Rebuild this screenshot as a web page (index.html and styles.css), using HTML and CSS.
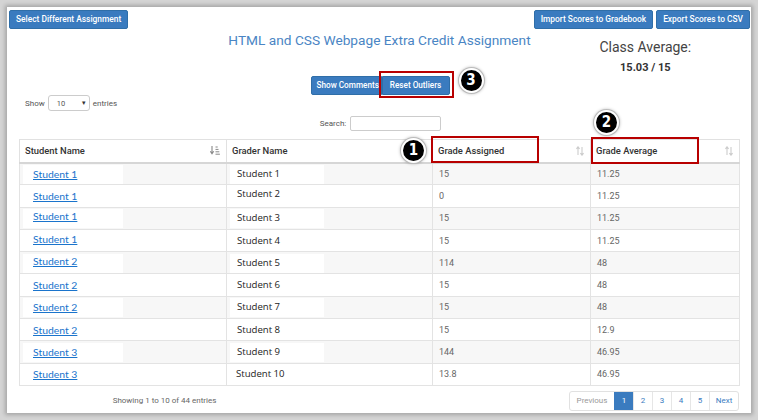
FILE: index.html
```html
<!DOCTYPE html>
<html>
<head>
<meta charset="utf-8">
<link rel="stylesheet" href="styles.css">
</head>
<body>
<div class="card">
  <div class="topbar">
    <button class="btn">Select Different Assignment</button>
    <div class="btn-row">
      <button class="btn">Import Scores to Gradebook</button>
      <button class="btn">Export Scores to CSV</button>
    </div>
  </div>
  <div class="head">
    <div></div>
    <h1 class="title">HTML and CSS Webpage Extra Credit Assignment</h1>
    <div class="avg">
      <div class="avg-label">Class Average:</div>
      <div class="avg-value">15.03 / 15</div>
    </div>
  </div>
  <div class="actions">
    <div class="btn-group">
      <button class="btn btn-join">Show Comments</button>
      <button class="btn btn-join marked">Reset Outliers</button>
      <span class="badge badge-3">3</span>
    </div>
  </div>
  <div class="length">
    <span>Show</span>
    <div class="select"><span>10</span><span class="caret">▾</span></div>
    <span>entries</span>
  </div>
  <div class="search">
    <span>Search:</span>
    <div class="input"></div>
  </div>
  <table class="grid">
    <colgroup>
      <col class="c1"><col class="c2"><col class="c3"><col class="c4">
    </colgroup>
    <thead>
      <tr>
        <th><div class="th-in"><span>Student Name</span>
          <svg class="sort sort-on" width="10" height="9" viewBox="0 0 10 9"><path d="M2 0v7M0.3 5.3L2 7.8 3.7 5.3" fill="none" stroke="#888" stroke-width="1.1"/><path d="M5.5 1h2.2M5.5 3.4h3M5.5 5.8h3.8M5.5 8.2h4.4" stroke="#888" stroke-width="1"/></svg>
        </div></th>
        <th><div class="th-in"><span>Grader Name</span></div></th>
        <th class="boxed"><div class="th-in"><span>Grade Assigned</span>
          <svg class="sort" width="8" height="10" viewBox="0 0 8 10"><path d="M2 1v8M0.4 2.8L2 0.8 3.6 2.8M6 1v8M4.4 7.2L6 9.2 7.6 7.2" fill="none" stroke="#ccc" stroke-width="1.1"/></svg>
        </div><span class="redbox rb-1"></span><span class="badge badge-1">1</span></th>
        <th class="boxed"><div class="th-in"><span>Grade Average</span>
          <svg class="sort" width="8" height="10" viewBox="0 0 8 10"><path d="M2 1v8M0.4 2.8L2 0.8 3.6 2.8M6 1v8M4.4 7.2L6 9.2 7.6 7.2" fill="none" stroke="#ccc" stroke-width="1.1"/></svg>
        </div><span class="redbox rb-2"></span><span class="badge badge-2">2</span></th>
      </tr>
    </thead>
    <tbody>
      <tr><td class="pc"><div class="paste"><a href="#">Student 1</a></div></td><td class="pc"><div class="paste g">Student 1</div></td><td>15</td><td>11.25</td></tr>
      <tr><td class="pc"><div class="paste"><a href="#">Student 1</a></div></td><td class="pc"><div class="paste g up">Student 2</div></td><td>0</td><td>11.25</td></tr>
      <tr><td class="pc"><div class="paste up"><a href="#">Student 1</a></div></td><td class="pc"><div class="paste g">Student 3</div></td><td>15</td><td>11.25</td></tr>
      <tr><td class="pc"><div class="paste up"><a href="#">Student 1</a></div></td><td class="pc"><div class="paste g">Student 4</div></td><td>15</td><td>11.25</td></tr>
      <tr><td class="pc"><div class="paste up"><a href="#">Student 2</a></div></td><td class="pc"><div class="paste g">Student 5</div></td><td>114</td><td>48</td></tr>
      <tr><td class="pc"><div class="paste"><a href="#">Student 2</a></div></td><td class="pc"><div class="paste g">Student 6</div></td><td>15</td><td>48</td></tr>
      <tr><td class="pc"><div class="paste"><a href="#">Student 2</a></div></td><td class="pc"><div class="paste g">Student 7</div></td><td>15</td><td>48</td></tr>
      <tr><td class="pc"><div class="paste"><a href="#">Student 2</a></div></td><td class="pc"><div class="paste g">Student 8</div></td><td>15</td><td>12.9</td></tr>
      <tr><td class="pc"><div class="paste"><a href="#">Student 3</a></div></td><td class="pc"><div class="paste g">Student 9</div></td><td>144</td><td>46.95</td></tr>
      <tr><td class="pc"><div class="paste"><a href="#">Student 3</a></div></td><td class="pc"><div class="paste g g10">Student 10</div></td><td>13.8</td><td>46.95</td></tr>
    </tbody>
  </table>
  <div class="footer">
    <div class="info">Showing 1 to 10 of 44 entries</div>
    <ul class="pager">
      <li class="prev">Previous</li>
      <li class="active">1</li>
      <li>2</li>
      <li>3</li>
      <li>4</li>
      <li>5</li>
      <li class="next">Next</li>
    </ul>
  </div>
</div>
</body>
</html>
```
FILE: styles.css
```css
* { box-sizing: border-box; }
html, body { margin: 0; padding: 0; }
body {
  background: #d4d4d4;
  width: 758px;
  height: 420px;
  overflow: hidden;
  padding: 7px 7px 7px 7px;
  font-family: Roboto, "Liberation Sans", sans-serif;
}
.card {
  position: relative;
  width: 744px;
  height: 406px;
  background: #fff;
  box-shadow: 0 0 4px 2px rgba(0,0,0,0.22);
  padding: 3px 1px 0 2px;
}
.topbar {
  display: flex;
  justify-content: space-between;
  height: 19px;
}
.btn-row { display: flex; gap: 3px; }
.btn {
  font-family: Roboto, "Liberation Sans", sans-serif;
  font-weight: 500;
  font-size: 8.4px;
  color: #fff;
  background: #3a7bbf;
  border: 1px solid #2f6ea8;
  border-radius: 2px;
  height: 19px;
  padding: 0 6px;
  line-height: 17px;
  white-space: nowrap;
}
.head {
  display: grid;
  grid-template-columns: 1fr auto 1fr;
  height: 46px;
}
.title {
  margin: 3px 0 0 0;
  font-weight: 400;
  font-size: 13.7px;
  line-height: 16px;
  color: #4a85c4;
}
.avg {
  padding: 10px 0 0 10px;
  text-align: center;
  color: #333;
}
.avg-label { font-size: 14px; line-height: 16px; color: #444; }
.avg-value { margin-top: 6px; font-size: 11px; font-weight: 700; line-height: 14px; color: #333; }
.actions {
  display: flex;
  justify-content: center;
  margin-top: 1px;
  padding-left: 1px;
}
.btn-group { position: relative; display: flex; }
.btn-join { border-radius: 0; padding: 0 5px; font-size: 8.2px; }
.btn-join:first-child { border-radius: 2px 0 0 2px; width: 71px; }
.btn-join:last-of-type { border-radius: 0 2px 2px 0; width: 68px; }
.marked { position: relative; }
.marked::after {
  content: "";
  position: absolute;
  top: -6px; left: -4px; right: -5px; bottom: -4px;
  border: 2px solid #b80000;
}
.badge {
  position: absolute;
  width: 25px;
  height: 25px;
  border-radius: 50%;
  background: #000;
  border: 2px solid #fff;
  box-shadow: 0 0 0 1px #bbb, 0 0 3px 1px rgba(0,0,0,0.25);
  color: #fff;
  font-family: "Liberation Sans Narrow", "DejaVu Sans Condensed", sans-serif;
  font-weight: 700;
  font-size: 15px;
  line-height: 21px;
  text-align: center;
}
.badge-3 { left: 148px; top: -8px; }
.badge-1 { left: -32px; top: -2px; }
.badge-2 { left: 3px; top: -30px; }
.length {
  display: flex;
  align-items: center;
  gap: 3px;
  padding-left: 16px;
  height: 16px;
  font-size: 8px;
  color: #555;
}
.select {
  display: flex;
  justify-content: space-between;
  align-items: center;
  width: 42px;
  height: 16px;
  border: 1px solid #ccc;
  border-radius: 3px;
  padding: 0 3px 0 8px;
  font-size: 7.5px;
  color: #555;
}
.caret { font-size: 7px; color: #333; }
.search {
  display: flex;
  justify-content: center;
  align-items: center;
  gap: 4px;
  margin-top: 5px;
  height: 15px;
  font-size: 8px;
  color: #555;
  padding-left: 2px;
}
.input {
  width: 91px;
  height: 15px;
  border: 1px solid #ccc;
  border-radius: 2px;
}
.grid {
  margin: 8px 0 0 10px;
  width: 720px;
  border-collapse: collapse;
  table-layout: fixed;
}
.c1 { width: 207px; }
.c2 { width: 206px; }
.c3 { width: 158px; }
.c4 { width: 149px; }
.grid th {
  position: relative;
  height: 23px;
  padding: 0 5px;
  border: 1px solid #e1e1e1;
  border-bottom: 2px solid #d6d6d6;
  text-align: left;
  font-weight: 500;
  font-size: 9.4px;
  color: #333;
}
.th-in {
  display: flex;
  justify-content: space-between;
  align-items: center;
}
.sort { display: block; margin-right: 1px; }
.redbox {
  position: absolute;
  top: -4px;
  left: -2px;
  height: 27px;
  border: 2px solid #b80000;
}
.rb-1 { width: 108px; }
.rb-2 { left: 0; top: -3px; width: 108px; }
.grid td {
  height: 22.3px;
  padding: 0 6px;
  border: 1px solid #e3e3e3;
  font-size: 9px;
  color: #666;
}
.grid tbody tr:nth-child(odd) td { background: #f7f7f7; }
.grid td.pc { padding: 0; }
.paste {
  width: 100px;
  height: 19px;
  margin: 1px 0 0 3px;
  background: #fff;
  padding: 2px 0 0 10px;
  font-family: Lato, "Open Sans", sans-serif;
  font-weight: 400;
  font-size: 10.4px;
  line-height: 14px;
}
.paste.up { padding-top: 0; }
.paste.g {
  width: 94px;
  padding-left: 7px;
  color: #222;
  font-family: "Open Sans", Lato, sans-serif;
  font-size: 9.6px;
}
.paste.g10 { padding-left: 6px; }
.paste a { color: #1a74cc; text-decoration: underline; }
.footer {
  display: flex;
  justify-content: space-between;
  align-items: center;
  margin: 5px 0 0 10px;
  width: 720px;
}
.info {
  width: 291px;
  text-align: center;
  font-size: 8px;
  color: #666;
}
.pager {
  display: flex;
  margin: 0;
  padding: 0;
  list-style: none;
  border: 1px solid #e1e1e1;
  border-radius: 3px;
  height: 20px;
  font-size: 8px;
}
.pager li {
  width: 19px;
  display: flex;
  align-items: center;
  justify-content: center;
  color: #3a7bbf;
  border-left: 1px solid #e6e6e6;
}
.pager li:first-child { border-left: 0; }
.pager .prev { width: 44px; color: #999; }
.pager .next { width: 29px; }
.pager .active { background: #3a7bbf; color: #fff; border-left-color: #3a7bbf; }
```
